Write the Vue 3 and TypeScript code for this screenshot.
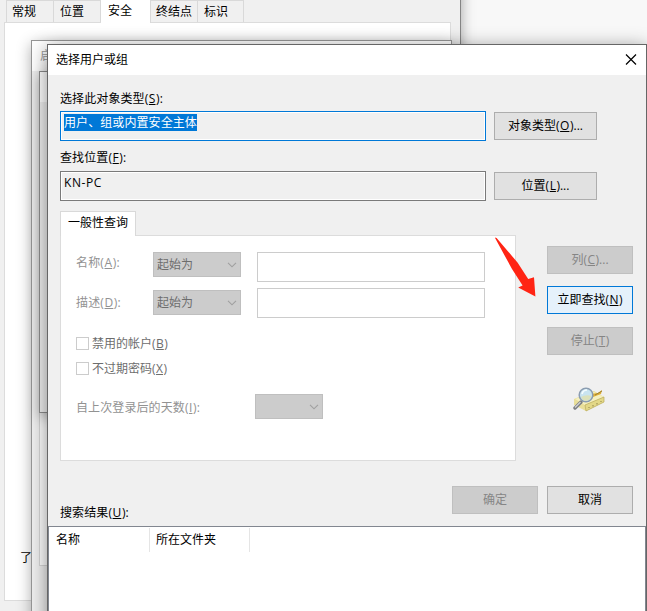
<script setup lang="ts">
interface Caption {
  text: string
  key?: string
  tail?: string
}

const backTabs: { text: string; width: number; active?: boolean }[] = [
  { text: '常规', width: 48 },
  { text: '位置', width: 47 },
  { text: '安全', width: 50, active: true },
  { text: '终结点', width: 47 },
  { text: '标识', width: 46 },
]

const lookups: { label: Caption; value: string; button: Caption; selected: boolean }[] = [
  {
    label: { text: '选择此对象类型(', key: 'S', tail: '):' },
    value: '用户、组或内置安全主体',
    button: { text: '对象类型(', key: 'O', tail: ')...' },
    selected: true,
  },
  {
    label: { text: '查找位置(', key: 'F', tail: '):' },
    value: 'KN-PC',
    button: { text: '位置(', key: 'L', tail: ')...' },
    selected: false,
  },
]

const filters: Caption[] = [
  { text: '名称(', key: 'A', tail: '):' },
  { text: '描述(', key: 'D', tail: '):' },
]

const checks: Caption[] = [
  { text: '禁用的帐户(', key: 'B', tail: ')' },
  { text: '不过期密码(', key: 'X', tail: ')' },
]

const columns: string[] = ['名称', '所在文件夹']
</script>

<template>
  <div class="desktop">
    <div class="window back">
      <div class="back-tabs">
        <div
          v-for="tab in backTabs"
          :key="tab.text"
          class="back-tab"
          :class="{ active: tab.active }"
          :style="{ width: tab.width + 'px' }"
        >{{ tab.text }}</div>
      </div>
      <div class="back-page"><span>了</span></div>
    </div>

    <div class="window middle">
      <div class="middle-title">启</div>
      <div class="middle-page"></div>
    </div>
    <div class="window inner"><div class="inner-title"></div></div>

    <div class="window dialog">
      <header class="title">
        <span>选择用户或组</span>
        <svg class="close" width="12" height="12" viewBox="0 0 12 12">
          <path d="M1 .5L11 10.5M11 .5L1 10.5" fill="none" stroke="#000" stroke-width="1.2" />
        </svg>
      </header>

      <main class="body">
        <div v-for="item in lookups" :key="item.value" class="lookup">
          <div class="lookup-label">{{ item.label.text }}<u>{{ item.label.key }}</u>{{ item.label.tail }}</div>
          <div class="lookup-row">
            <div class="field" :class="{ focused: item.selected }"><span>{{ item.value }}</span></div>
            <button class="btn wide">{{ item.button.text }}<u>{{ item.button.key }}</u>{{ item.button.tail }}</button>
          </div>
        </div>

        <section class="query">
          <div class="query-left">
            <div class="query-tab">一般性查询</div>
            <div class="query-page">
              <div v-for="filter in filters" :key="filter.key" class="filter">
                <label>{{ filter.text }}<u>{{ filter.key }}</u>{{ filter.tail }}</label>
                <div class="select">
                  <span>起始为</span>
                  <svg width="10" height="6" viewBox="0 0 10 6"><path d="M1 .8L5 4.8L9 .8" fill="none" stroke="#a0a0a0" stroke-width="1.1" /></svg>
                </div>
                <div class="input"></div>
              </div>
              <div class="checks">
                <div v-for="check in checks" :key="check.key" class="check">
                  <i></i><span>{{ check.text }}<u>{{ check.key }}</u>{{ check.tail }}</span>
                </div>
              </div>
              <div class="days">
                <label>自上次登录后的天数(<u>I</u>):</label>
                <div class="select">
                  <span></span>
                  <svg width="10" height="6" viewBox="0 0 10 6"><path d="M1 .8L5 4.8L9 .8" fill="none" stroke="#a0a0a0" stroke-width="1.1" /></svg>
                </div>
              </div>
            </div>
          </div>

          <div class="actions">
            <button class="btn disabled">列(<u>C</u>)...</button>
            <button class="btn primary">立即查找(<u>N</u>)</button>
            <button class="btn disabled stop">停止(<u>T</u>)</button>
            <svg class="finder" width="34" height="27" viewBox="0 0 34 27">
              <path d="M1 12L21 4L31 10V15L13 24L1 18Z" fill="#e9df9a" />
              <path d="M2 12L21 5L31 10L12 18Z" fill="#f5f0c0" />
              <path d="M12 18L31 10V15L13 24Z" fill="#e3d888" stroke="#b9aa5c" stroke-width=".7" />
              <path d="M17 7L25 6L29 3L28 7L20 10Z" fill="#dfae35" />
              <path d="M22 8L29 4" stroke="#9b8136" stroke-width="1" />
              <path d="M16 20V21M20 18V19.5M24 16V17.5M28 14V15" stroke="#8f8448" />
              <path d="M8 15L2 21" stroke="#7c7f83" stroke-width="3.4" stroke-linecap="round" />
              <path d="M7.5 15L2 20.5" stroke="#cfd1d3" stroke-width="1.3" />
              <ellipse cx="13" cy="8" rx="6.8" ry="6.7" fill="#c9e4f0" stroke="#8b9db1" stroke-width="1.5" />
              <path d="M8 10Q13 7 18.5 9Q17 14 12 14Q9 13 8 10Z" fill="#dbe1bb" />
              <path d="M9 7Q10 3 14 3" fill="none" stroke="#f4fcff" stroke-width="1.7" />
            </svg>
          </div>
        </section>

        <div class="footer">
          <div class="results-label">搜索结果(<u>U</u>):</div>
          <button class="btn disabled">确定</button>
          <button class="btn">取消</button>
        </div>
      </main>

      <div class="results">
        <div v-for="column in columns" :key="column" class="column">{{ column }}</div>
      </div>
    </div>

    <svg class="arrow" width="44" height="62" viewBox="0 0 44 62">
      <path d="M1.8 .6L3.6 1L24.5 25.5L35.2 42L41 40.2L42.4 59.4L25.2 50.4L29.6 48.4L19 32Z" fill="#ff2414" />
    </svg>
  </div>
</template>

<style>
body {
  margin: 0;
  overflow: hidden;
}
</style>

<style scoped>
* {
  box-sizing: border-box;
}

.desktop {
  position: relative;
  width: 647px;
  height: 611px;
  overflow: hidden;
  background: #f8f8f8;
  color: #000;
  font: 12px/16px "Open Sans", "Noto Sans CJK SC", sans-serif;
}

.window {
  position: absolute;
  background: #f0f0f0;
}

u {
  padding: 0 .5px;
  text-decoration-thickness: 1px;
  text-underline-offset: 1px;
}

.back {
  left: -1px;
  top: -30px;
  width: 462px;
  height: 690px;
  padding: 30px 0 0 5px;
  border-right: 1px solid #858585;
  box-shadow: 0 4px 13px rgba(0, 0, 0, .34);
}

.back-tabs {
  display: flex;
  height: 22px;
  padding-left: 2px;
}

.back-tab {
  border: 1px solid #d9d9d9;
  border-left: 0;
  border-bottom: 0;
  padding-top: 3px;
  padding-left: 5px;
}

.back-tab:first-child {
  border-left: 1px solid #d9d9d9;
}

.back-tab.active {
  height: 23px;
  position: relative;
  background: #fff;
  border-top: 0;
  padding-left: 7px;
}

.back-tab:nth-child(2) {
  padding-left: 6px;
}

.back-tab:last-child {
  padding-left: 6px;
}

.back-page {
  width: 447px;
  height: 579px;
  border: 1px solid #dcdcdc;
  background: #fff;
  padding: 527px 0 0 15px;
}

.middle {
  left: 31px;
  top: 40px;
  width: 421px;
  height: 620px;
  border: 1px solid #969696;
  box-shadow: 0 4px 14px rgba(0, 0, 0, .3);
}

.middle-title {
  height: 30px;
  background: #fff;
  color: #999;
  padding: 7px 8px;
}

.middle-page {
  width: 390px;
  height: 495px;
  margin-left: 7px;
  border: 1px solid #d8d8d8;
  background: #fff;
}

.inner {
  left: 39px;
  top: 71px;
  width: 400px;
  height: 342px;
  border: 1px solid #8d8d8d;
  box-shadow: 0 4px 12px rgba(0, 0, 0, .28);
}

.inner-title {
  height: 30px;
  background: #fff;
}

.dialog {
  left: 47px;
  top: 44px;
  width: 600px;
  height: 620px;
  border: 1px solid #666;
  box-shadow: 0 4px 18px rgba(0, 0, 0, .46);
}

.title {
  display: flex;
  justify-content: space-between;
  align-items: center;
  height: 30px;
  padding: 0 9px 0 8px;
  background: #fff;
}

.close {
  display: block;
}

.body {
  padding: 0 13px 0 12px;
}

.lookup-label {
  height: 36px;
  padding-top: 16px;
  letter-spacing: .1px;
}

.lookup + .lookup .lookup-label {
  height: 30px;
  padding-top: 9px;
}

.lookup-row {
  display: flex;
  align-items: center;
  gap: 8px;
}

.field {
  width: 426px;
  height: 30px;
  padding: 3px 3px;
  border: 1px solid #7a7a7a;
  box-shadow: inset 0 0 0 1px #fff;
}

.field span {
  display: inline-block;
  letter-spacing: .6px;
}

.field.focused {
  padding-top: 2px;
  border-color: #0078d7;
}

.focused span {
  height: 17px;
  line-height: 17px;
  letter-spacing: .08px;
  background: #0078d7;
  color: #fff;
}

.btn {
  width: 86px;
  height: 28px;
  flex: none;
  padding: 0;
  border: 1px solid #adadad;
  background: #e1e1e1;
  color: #000;
  font: inherit;
}

.btn.wide {
  width: 103px;
}

.btn.disabled {
  border-color: #bfbfbf;
  background: #ccc;
  color: #858585;
}

.btn.primary {
  border-color: #0078d7;
  background: #e5f1fb;
}

.query {
  display: flex;
  gap: 31px;
  padding-top: 10px;
}

.query-left {
  width: 456px;
}

.query-tab {
  position: relative;
  width: 76px;
  height: 25px;
  margin-bottom: -1px;
  border: 1px solid #d9d9d9;
  border-bottom: 0;
  background: #fff;
  padding: 3px 7px;
}

.query-page {
  height: 226px;
  padding: 16px 0 0 15px;
  border: 1px solid #dcdcdc;
  background: #fff;
  color: #929292;
}

.filter {
  display: flex;
  align-items: flex-start;
  height: 36px;
}

.filter + .filter {
  height: 30px;
}

.filter label {
  width: 77px;
  padding-top: 3px;
  letter-spacing: .15px;
}

.filter + .filter label {
  padding-top: 7px;
}

.select {
  display: flex;
  align-items: center;
  justify-content: space-between;
  width: 88px;
  height: 25px;
  padding: 0 3px;
  border: 1px solid #bfbfbf;
  background: #ccc;
  color: #6d6d6d;
}

.filter + .filter .select {
  margin-top: 2px;
}

.input {
  width: 228px;
  height: 30px;
  margin-left: 16px;
  border: 1px solid #ccc;
}

.checks {
  display: flex;
  flex-direction: column;
  gap: 12px;
  padding-top: 19px;
}

.check {
  display: flex;
  align-items: center;
  gap: 3px;
  height: 13px;
  color: #6d6d6d;
}

.check i {
  width: 13px;
  height: 13px;
  border: 1px solid #ccc;
}

.days {
  display: flex;
  align-items: center;
  padding-top: 19px;
}

.days label {
  width: 179px;
  padding-top: 2px;
  letter-spacing: .1px;
}

.days .select {
  width: 68px;
}

.actions {
  display: flex;
  flex-direction: column;
  width: 86px;
  padding-top: 35px;
  gap: 12px;
}

.stop {
  margin-top: 1px;
}

.finder {
  margin: 20px 0 0 26px;
}

.footer {
  display: flex;
  gap: 9px;
  height: 65px;
  padding-top: 25px;
}

.results-label {
  width: 383px;
  padding-top: 19px;
  letter-spacing: .1px;
}

.results {
  display: flex;
  height: 140px;
  padding-top: 1px;
  border: 1px solid #828790;
  background: #fff;
}

.column {
  width: 100px;
  height: 24px;
  padding: 4px 0 0 6px;
  border-right: 1px solid #e5e5e5;
}

.column:first-child {
  width: 101px;
  padding-left: 7px;
}

.arrow {
  position: absolute;
  left: 493px;
  top: 237px;
}
</style>
